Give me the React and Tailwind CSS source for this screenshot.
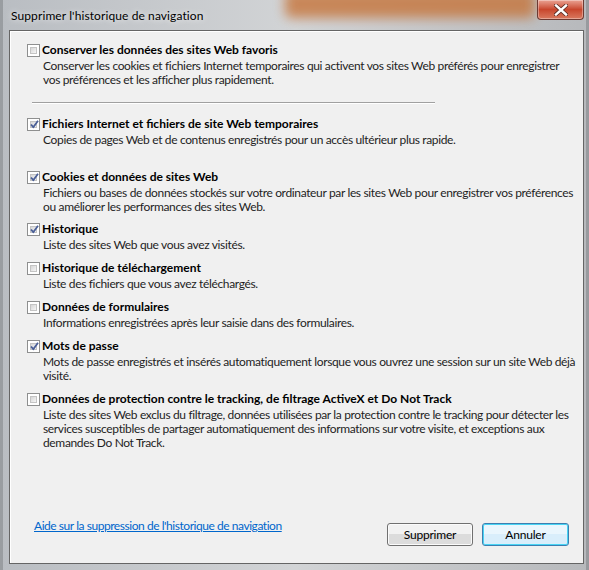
import React from "react";

const font = { fontFamily: 'Lato, "Open Sans", sans-serif' };

function Check({ checked }) {
  return (
    <div className="relative mt-[1px] h-[13px] w-[13px] shrink-0 border border-[#8e8f8f] bg-white">
      <div className="absolute inset-[2px] border border-[#c4c4c4] bg-gradient-to-br from-[#d6d6d6] to-[#f6f6f6]" />
      {checked && (
        <svg className="absolute left-[1px] top-[0px]" width="11" height="11" viewBox="0 0 11 11">
          <path d="M2 5.5 L4.3 8.2 L9 1.8" fill="none" stroke="#4a5f97" strokeWidth="1.8" strokeLinejoin="round" />
        </svg>
      )}
    </div>
  );
}

function Item({ checked, title, lines, className = "" }) {
  return (
    <div className={"flex gap-[2px] " + className}>
      <Check checked={checked} />
      <div className="flex flex-col whitespace-nowrap">
        <div className="h-[14px] text-[12px] font-bold leading-[14px] text-black">{title}</div>
        <div className="mt-[2px] pl-[1px] text-[12px] leading-[14px] tracking-[-0.35px] text-[#1e1e1e]">
          {lines.map((l, i) => (
            <div key={i}>{l}</div>
          ))}
        </div>
      </div>
    </div>
  );
}

export default function App() {
  return (
    <div
      className="relative h-[570px] w-[589px] overflow-hidden bg-gradient-to-r from-[#b9bdc2] via-[#d2d4d6] to-[#b7b9bc]"
      style={font}
    >
      <div className="absolute left-[285px] top-[-10px] h-[28px] w-[250px] rounded-[6px] bg-[#c6743a] opacity-80 blur-[6px]" />
      <div className="absolute inset-0 border-l-[3px] border-r-[3px] border-[#6b6e72] opacity-40" />

      <div className="relative flex h-[30px] items-center pl-[11px] pt-[2px]">
        <span className="text-[12px] tracking-[0.1px] text-black [text-shadow:0_0_6px_#ffffff]">
          Supprimer l'historique de navigation
        </span>
        <div className="absolute right-[5px] top-0 flex h-[20px] w-[47px] items-center justify-center rounded-b-[4px] border border-t-0 border-[#6d3a32] bg-gradient-to-b from-[#e9a293] via-[#c8462d] to-[#d9795f] shadow-[inset_0_0_0_1px_rgba(255,255,255,0.35)]">
          <svg width="14" height="12" viewBox="0 0 14 12">
            <path d="M2 1.5 L12 10.5 M12 1.5 L2 10.5" stroke="#5a2a22" strokeWidth="4" strokeLinecap="square" />
            <path d="M2 1.5 L12 10.5 M12 1.5 L2 10.5" stroke="#ffffff" strokeWidth="2.4" strokeLinecap="square" />
          </svg>
        </div>
      </div>

      <div className="relative ml-[9px] mr-[5px] flex h-[534px] flex-col border border-[#656565] bg-[#f0f0f0] pl-[17px] pr-[10px] pt-[12px] shadow-[inset_1px_1px_0_#ffffff]">
        <Item
          checked={false}
          title="Conserver les données des sites Web favoris"
          lines={[
            "Conserver les cookies et fichiers Internet temporaires qui activent vos sites Web préférés pour enregistrer",
            "vos préférences et les afficher plus rapidement.",
          ]}
        />
        <div className="ml-[5px] mt-[15px] h-[2px] w-[403px] border-t border-b border-t-[#a0a0a0] border-b-white" />
        <Item
          className="mt-[13px]"
          checked={true}
          title="Fichiers Internet et fichiers de site Web temporaires"
          lines={["Copies de pages Web et de contenus enregistrés pour un accès ultérieur plus rapide."]}
        />
        <Item
          className="mt-[23px]"
          checked={true}
          title="Cookies et données de sites Web"
          lines={[
            "Fichiers ou bases de données stockés sur votre ordinateur par les sites Web pour enregistrer vos préférences",
            "ou améliorer les performances des sites Web.",
          ]}
        />
        <Item
          className="mt-[8px]"
          checked={true}
          title="Historique"
          lines={["Liste des sites Web que vous avez visités."]}
        />
        <Item
          className="mt-[9px]"
          checked={false}
          title="Historique de téléchargement"
          lines={["Liste des fichiers que vous avez téléchargés."]}
        />
        <Item
          className="mt-[9px]"
          checked={false}
          title="Données de formulaires"
          lines={["Informations enregistrées après leur saisie dans des formulaires."]}
        />
        <Item
          className="mt-[9px]"
          checked={true}
          title="Mots de passe"
          lines={[
            "Mots de passe enregistrés et insérés automatiquement lorsque vous ouvrez une session sur un site Web déjà",
            "visité.",
          ]}
        />
        <Item
          className="mt-[9px]"
          checked={false}
          title="Données de protection contre le tracking, de filtrage ActiveX et Do Not Track"
          lines={[
            "Liste des sites Web exclus du filtrage, données utilisées par la protection contre le tracking pour détecter les",
            "services susceptibles de partager automatiquement des informations sur votre visite, et exceptions aux",
            "demandes Do Not Track.",
          ]}
        />

        <div className="mt-auto mb-[17px] flex items-end justify-between pr-[4px]">
          <a className="mb-[13px] ml-[7px] text-[12px] leading-[14px] tracking-[-0.45px] text-[#0066cc] underline" href="#">
            Aide sur la suppression de l'historique de navigation
          </a>
          <div className="flex gap-[9px]">
            <button className="h-[23px] w-[86px] rounded-[3px] border border-[#707070] bg-gradient-to-b from-[#f2f2f2] from-50% to-[#dcdcdc] to-50% text-[12px] tracking-[-0.2px] text-black shadow-[inset_0_0_0_1px_#fbfbfb]">
              Supprimer
            </button>
            <button className="h-[23px] w-[87px] rounded-[3px] border border-[#3c7fb1] bg-gradient-to-b from-[#eaf6fd] from-50% to-[#d9eefb] to-50% text-[12px] tracking-[-0.2px] text-black shadow-[inset_0_0_0_1px_#48d4f4]">
              Annuler
            </button>
          </div>
        </div>
      </div>
    </div>
  );
}
